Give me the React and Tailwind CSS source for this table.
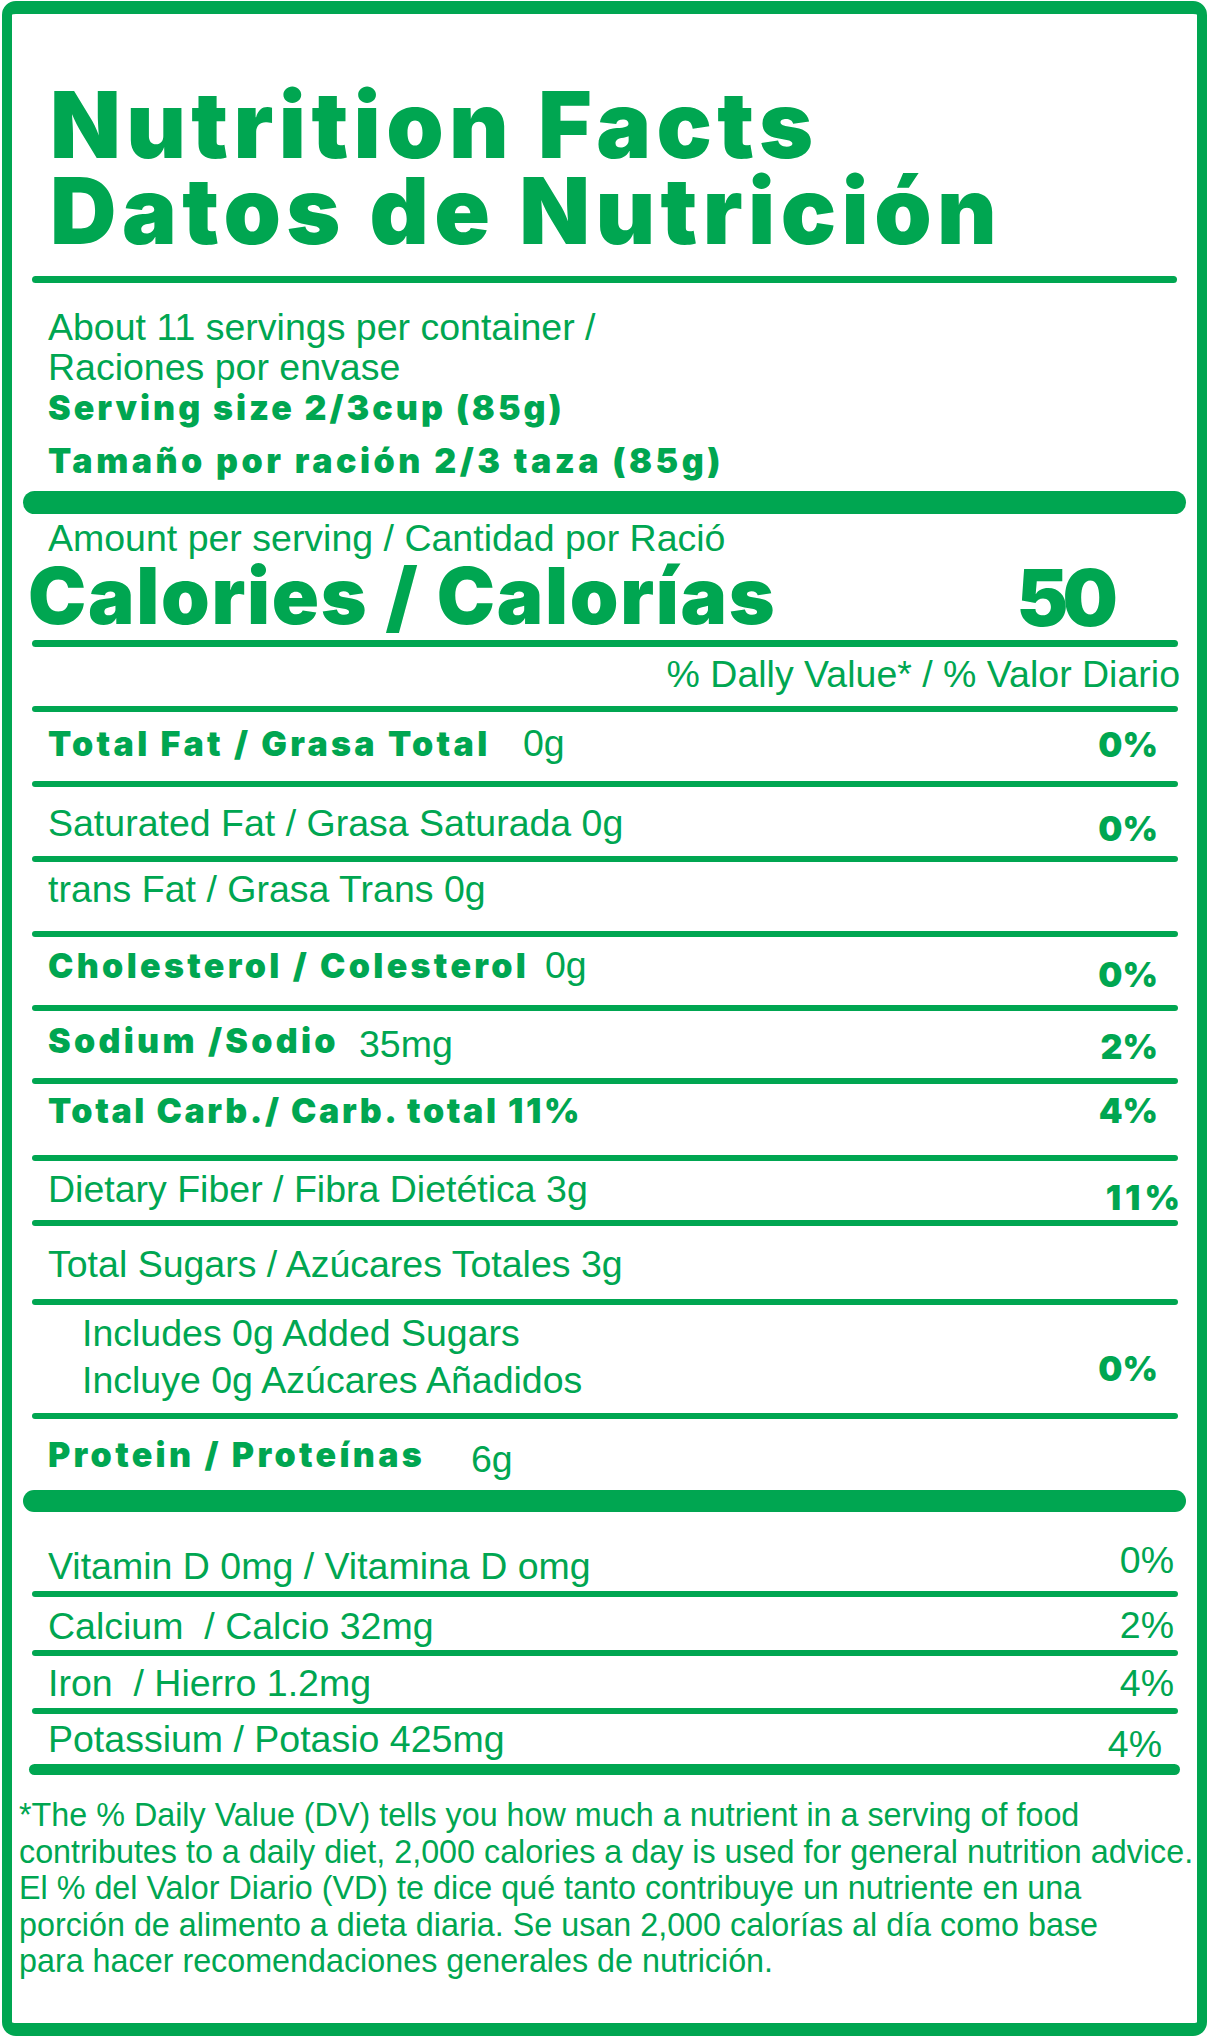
const REG = "font-['Liberation_Sans',Arial,sans-serif] font-normal text-[37.5px] whitespace-nowrap";
const BLD = "font-['Inter',sans-serif] font-black text-[34px] whitespace-nowrap";
const LBL = "font-['Inter',sans-serif] font-black text-[34px] tracking-[3.3px] whitespace-nowrap";

function Rule() {
  return <div className="h-[6px] ml-[20px] w-[1146px] shrink-0 rounded-full bg-[#00a651]" />;
}

function Row({ h, children, pct, rule = true }) {
  return (
    <div className={`flex flex-col ${h}`}>
      {rule && <Rule />}
      <div className="flex justify-between items-start">
        <div className="ml-[36px] flex items-start">{children}</div>
        {pct}
      </div>
    </div>
  );
}

export default function App() {
  return (
    <div className="w-[1210px] h-[2038px] bg-white pt-px pl-[2px] pr-[3px] pb-[2px] text-[#00a651]">
      <div className="h-full rounded-[14px] border-solid border-[#00a651] border-l-[10px] border-r-[10px] border-t-[13px] border-b-[13px] flex flex-col">
        <div className="mt-[68px] ml-[38px] font-['Inter',sans-serif] font-black text-[92px] leading-[86px] tracking-[5.4px] whitespace-nowrap">
          <div>Nutrition Facts</div>
          <div>Datos de Nutrición</div>
        </div>
        <div className="mt-[22px] ml-[20px] w-[1145px] h-[7px] rounded-full bg-[#00a651]" />
        <div className={`mt-[24px] ml-[36px] leading-[40px] ${REG}`}>
          <div>About 11 servings per container /</div>
          <div>Raciones por envase</div>
        </div>
        <div className="mt-[1px] ml-[36px] font-['Inter',sans-serif] font-black text-[34px] leading-[40px] tracking-[3px] whitespace-nowrap">
          Serving size 2/3cup (85g)
        </div>
        <div className="mt-[13px] ml-[36px] font-['Inter',sans-serif] font-black text-[34px] leading-[40px] tracking-[3.5px] whitespace-nowrap">
          Tamaño por ración 2/3 taza (85g)
        </div>
        <div className="mt-[10px] ml-[11px] w-[1163px] h-[23px] rounded-full bg-[#00a651]" />
        <div className={`mt-[4px] ml-[36px] leading-[40px] ${REG}`}>
          Amount per serving / Cantidad por Ració
        </div>
        <div className="h-[82px] flex justify-between items-start font-['Inter',sans-serif] font-black text-[78px] leading-[70px] whitespace-nowrap">
          <div className="mt-[3px] ml-[16px] tracking-[1.7px]">Calories / Calorías</div>
          <div className="mt-[5px] mr-[85px] tracking-[-6px]">50</div>
        </div>
        <div className="h-[7px] ml-[20px] w-[1146px] rounded-full bg-[#00a651]" />
        <div className={`mt-[7px] pr-[17px] text-right leading-[40px] ${REG}`}>
          % Dally Value* / % Valor Diario
        </div>

        <div className="mt-[12px] flex flex-col">
          <Row
            h="h-[75px]"
            pct={<div className={`mt-[16px] mr-[39px] leading-none ${BLD}`}>0%</div>}
          >
            <div className={`mt-[15px] w-[475px] leading-none ${LBL}`}>Total Fat / Grasa Total</div>
            <div className={`mt-[13px] leading-none ${REG}`}>0g</div>
          </Row>
          <Row
            h="h-[75px]"
            pct={<div className={`mt-[25px] mr-[39px] leading-none ${BLD}`}>0%</div>}
          >
            <div className={`mt-[18px] leading-none ${REG}`}>Saturated Fat / Grasa Saturada 0g</div>
          </Row>
          <Row h="h-[75px]">
            <div className={`mt-[9px] leading-none ${REG}`}>trans Fat / Grasa Trans 0g</div>
          </Row>
          <Row
            h="h-[74px]"
            pct={<div className={`mt-[21px] mr-[39px] leading-none ${BLD}`}>0%</div>}
          >
            <div className={`mt-[12px] w-[497px] leading-none ${LBL}`}>Cholesterol / Colesterol</div>
            <div className={`mt-[10px] leading-none ${REG}`}>0g</div>
          </Row>
          <Row
            h="h-[73px]"
            pct={<div className={`mt-[19px] mr-[39px] leading-none ${BLD}`}>2%</div>}
          >
            <div className={`mt-[13px] w-[311px] leading-none ${LBL}`}>Sodium /Sodio</div>
            <div className={`mt-[15px] leading-none ${REG}`}>35mg</div>
          </Row>
          <Row
            h="h-[77px]"
            pct={<div className={`mt-[10px] mr-[39px] leading-none ${BLD}`}>4%</div>}
          >
            <div className="mt-[10px] leading-none font-['Inter',sans-serif] font-black text-[34px] tracking-[2.6px] whitespace-nowrap">
              Total Carb./ Carb. total 11%
            </div>
          </Row>
          <Row
            h="h-[65px]"
            pct={<div className={`mt-[20px] mr-[13px] leading-none tracking-[4px] ${BLD}`}>11%</div>}
          >
            <div className={`mt-[10px] leading-none ${REG}`}>Dietary Fiber / Fibra Dietética 3g</div>
          </Row>
          <Row h="h-[79px]">
            <div className={`mt-[20px] leading-none ${REG}`}>Total Sugars / Azúcares Totales 3g</div>
          </Row>
          <Row
            h="h-[114px]"
            pct={<div className={`mt-[47px] mr-[39px] leading-none ${BLD}`}>0%</div>}
          >
            <div className="ml-[34px] flex flex-col">
              <div className={`mt-[10px] leading-none ${REG}`}>Includes 0g Added Sugars</div>
              <div className={`mt-[9px] leading-none ${REG}`}>Incluye 0g Azúcares Añadidos</div>
            </div>
          </Row>
          <Row h="h-[77px]">
            <div className={`mt-[19px] w-[423px] leading-none ${LBL}`}>Protein / Proteínas</div>
            <div className={`mt-[22px] leading-none ${REG}`}>6g</div>
          </Row>
        </div>

        <div className="h-[22px] ml-[11px] w-[1163px] rounded-full bg-[#00a651]" />

        <div className="flex flex-col">
          <Row
            h="h-[79px]"
            rule={false}
            pct={<div className={`mt-[30px] mr-[23px] leading-none ${REG}`}>0%</div>}
          >
            <div className={`mt-[36px] leading-none ${REG}`}>Vitamin D 0mg / Vitamina D omg</div>
          </Row>
          <Row
            h="h-[59px]"
            pct={<div className={`mt-[10px] mr-[23px] leading-none ${REG}`}>2%</div>}
          >
            <div className={`mt-[11px] leading-none ${REG}`}>Calcium{"\u00a0"} / Calcio 32mg</div>
          </Row>
          <Row
            h="h-[58px]"
            pct={<div className={`mt-[9px] mr-[23px] leading-none ${REG}`}>4%</div>}
          >
            <div className={`mt-[9px] leading-none ${REG}`}>Iron{"\u00a0"} / Hierro 1.2mg</div>
          </Row>
          <Row
            h="h-[56px]"
            pct={<div className={`mt-[12px] mr-[35px] leading-none ${REG}`}>4%</div>}
          >
            <div className={`mt-[7px] leading-none ${REG}`}>Potassium / Potasio 425mg</div>
          </Row>
        </div>

        <div className="h-[11px] ml-[17px] w-[1151px] rounded-full bg-[#00a651]" />

        <div className="mt-[22px] pl-[7px] font-['Liberation_Sans',Arial,sans-serif] text-[32.3px] leading-[36.5px] whitespace-nowrap">
          <div>*The % Daily Value (DV) tells you how much a nutrient in a serving of food</div>
          <div>contributes to a daily diet, 2,000 calories a day is used for general nutrition advice.</div>
          <div>El % del Valor Diario (VD) te dice qué tanto contribuye un nutriente en una</div>
          <div>porción de alimento a dieta diaria. Se usan 2,000 calorías al día como base</div>
          <div>para hacer recomendaciones generales de nutrición.</div>
        </div>
      </div>
    </div>
  );
}
